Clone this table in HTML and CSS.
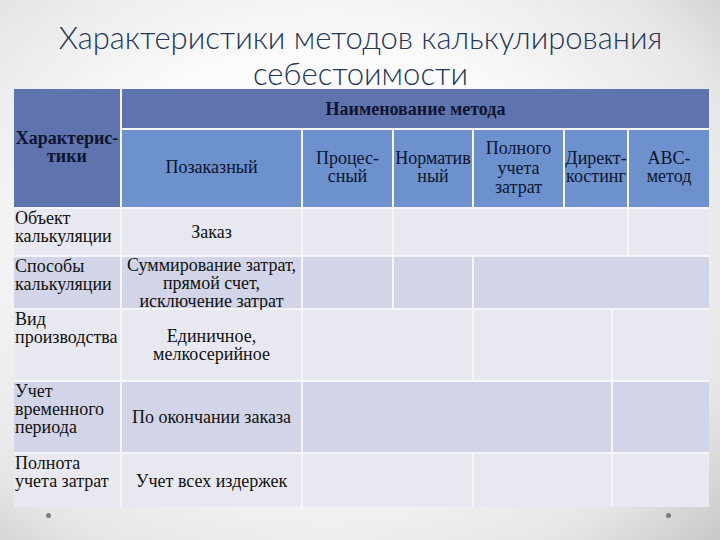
FILE: index.html
```html
<!DOCTYPE html>
<html lang="ru">
<head>
<meta charset="utf-8">
<title>Характеристики методов калькулирования себестоимости</title>
<link rel="stylesheet" href="styles.css">
</head>
<body>
<div class="slide">
  <h1 class="title">Характеристики методов калькулирования<br>себестоимости</h1>
  <div class="grid">
    <div class="cell h1 char">Характерис-<br>тики</div>
    <div class="cell h1 name span7">Наименование метода</div>
    <div class="cell h2">Позаказный</div>
    <div class="cell h2">Процес-<br>сный</div>
    <div class="cell h2">Норматив<br>ный</div>
    <div class="cell h2 tall">Полного<br>учета<br>затрат</div>
    <div class="cell h2 span2">Директ-<br>костинг</div>
    <div class="cell h2">ABC-<br>метод</div>

    <div class="cell lbl odd">Объект<br>калькуляции</div>
    <div class="cell val odd">Заказ</div>
    <div class="cell odd"></div>
    <div class="cell odd span4"></div>
    <div class="cell odd"></div>

    <div class="cell lbl even">Способы<br>калькуляции</div>
    <div class="cell val even">Суммирование затрат,<br>прямой счет,<br>исключение затрат</div>
    <div class="cell even"></div>
    <div class="cell even"></div>
    <div class="cell even span4"></div>

    <div class="cell lbl odd">Вид<br>производства</div>
    <div class="cell val odd">Единичное,<br>мелкосерийное</div>
    <div class="cell odd span2"></div>
    <div class="cell odd span2"></div>
    <div class="cell odd span2"></div>

    <div class="cell lbl even">Учет<br>временного<br>периода</div>
    <div class="cell val even">По окончании заказа</div>
    <div class="cell even span4"></div>
    <div class="cell even span2"></div>

    <div class="cell lbl odd">Полнота<br>учета затрат</div>
    <div class="cell val odd">Учет всех издержек</div>
    <div class="cell odd span2"></div>
    <div class="cell odd span2"></div>
    <div class="cell odd span2"></div>
  </div>
  <div class="dots">
    <span class="dot"></span>
    <span class="dot"></span>
  </div>
</div>
</body>
</html>
```
FILE: styles.css
```css
html, body {
  margin: 0;
  padding: 0;
}
body {
  width: 720px;
  height: 540px;
  overflow: hidden;
}
.slide {
  width: 720px;
  height: 540px;
  box-sizing: border-box;
  padding: 19px 11px 0 14px;
  background:
    radial-gradient(ellipse 75% 80% at 45% 45%, #ffffff 0%, #fbfbfb 45%, #e6e6e6 80%, #c9c9c9 100%);
}
.title {
  margin: 0;
  height: 70px;
  font-family: "Lato", "Open Sans", sans-serif;
  font-weight: 300;
  font-size: 31px;
  line-height: 36px;
  color: #24375a;
  text-align: center;
  padding-right: 2px;
}
.grid {
  display: grid;
  grid-template-columns: 106px 179px 89px 78px 89px 46px 14px 80px;
  grid-template-rows: 39px 77px 46px 51px 70px 70px 53px;
  gap: 2px;
  background: #f6f6f9;
  width: 695px;
  font-family: "Liberation Serif", "Times New Roman", serif;
  font-size: 18px;
  line-height: 18px;
  color: #111;
}
.cell {
  box-sizing: border-box;
  white-space: nowrap;
}
.span2 { grid-column: span 2; }
.span4 { grid-column: span 4; }
.span7 { grid-column: span 7; }
.h1 {
  background: #5f73af;
}
.char {
  grid-row: span 2;
  display: flex;
  align-items: center;
  justify-content: center;
  text-align: center;
  font-weight: bold;
  font-size: 18px;
  line-height: 18px;
  color: #0d1530;
  padding-bottom: 2px;
}
.name {
  display: flex;
  align-items: center;
  justify-content: center;
  font-weight: bold;
  font-size: 18px;
  color: #0d1530;
}
.h2 {
  background: #6c91cd;
  display: flex;
  align-items: center;
  justify-content: center;
  text-align: center;
  color: #0d1530;
  padding-bottom: 4px;
  line-height: 18px;
}
.tall {
  line-height: 19.5px;
  padding-bottom: 0;
}
.odd { background: #e8e9f0; }
.even { background: #d1d5e7; }
.lbl {
  padding: 0 0 0 1px;
}
.val {
  display: flex;
  align-items: center;
  justify-content: center;
  text-align: center;
  line-height: 18px;
}
.dots {
  display: flex;
  justify-content: space-between;
  padding: 6px 38px 0 32px;
}
.dot {
  width: 5px;
  height: 5px;
  border-radius: 50%;
  background: #7a7a7a;
}
```
